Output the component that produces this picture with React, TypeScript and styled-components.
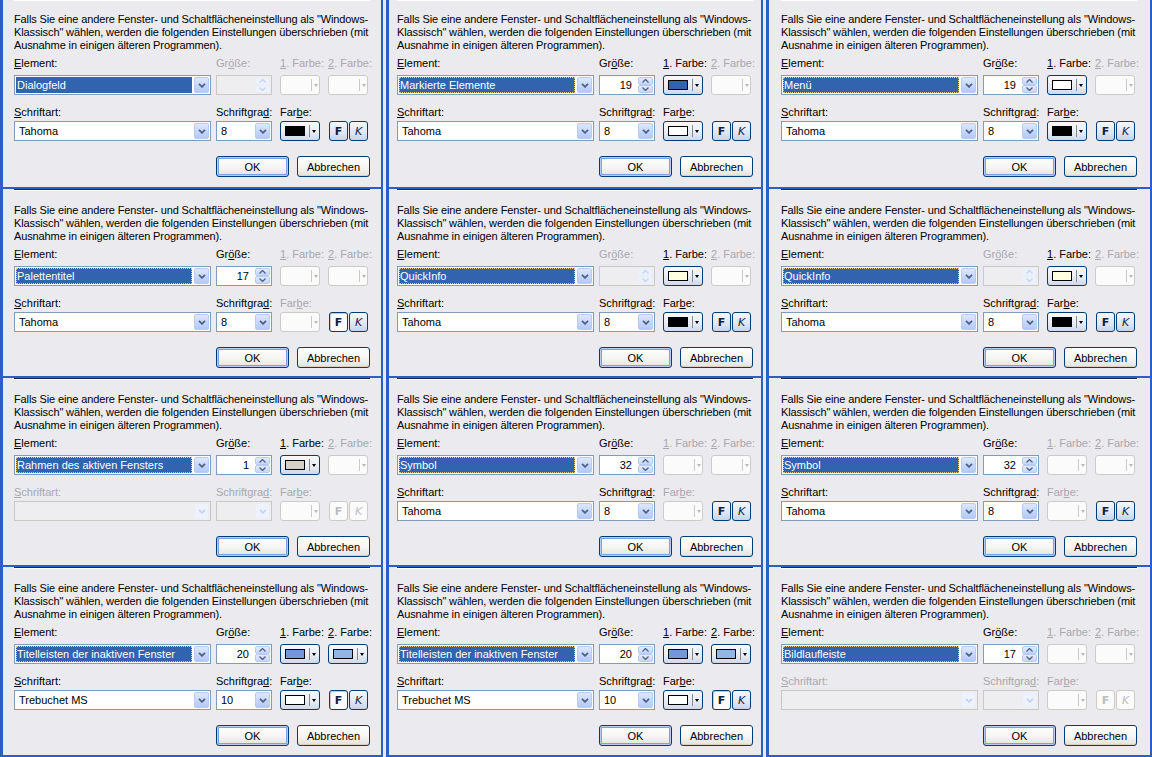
import React from "react";
import styled, { createGlobalStyle } from "styled-components";

const BG = "#ebeaee";
const FRAME = "#2d5ec6";
const GRAY = "#a9a8ad";
const NAVY = "#003c74";

const GlobalStyle = createGlobalStyle`
  html, body { margin: 0; padding: 0; background: ${BG}; }
  body {
    width: 1152px; height: 757px; overflow: hidden;
    font-family: "Liberation Sans", Arial, sans-serif;
    font-size: 11px;
  }
`;

const Grid = styled.div`
  display: grid;
  grid-template-columns: 383px 377px 386px;
  column-gap: 3px;
  grid-template-rows: 189px 189px 189px 190px;
  width: 1152px;
  height: 757px;
  background: ${BG};
`;

const Cell = styled.div<{ $pad: number }>`
  display: flex;
  flex-direction: column;
  box-sizing: border-box;
  border-left: 3px solid ${FRAME};
  border-right: 2px solid ${FRAME};
  border-bottom: 2px solid ${FRAME};
  padding-left: ${(p) => p.$pad}px;
  color: #000;
  overflow: hidden;
`;

const TopEdge = styled.div<{ $first?: boolean }>`
  width: 356px;
  height: ${(p) => (p.$first ? 1 : 2)}px;
  box-sizing: border-box;
  border-top: 1px solid ${(p) => (p.$first ? "#ffffff" : "#1e2850")};
  border-bottom: ${(p) => (p.$first ? "0" : "1px solid #ffffff")};
`;

const Intro = styled.p<{ $first?: boolean }>`
  margin: ${(p) => (p.$first ? 12 : 13)}px 0 0;
  line-height: 13px;
  letter-spacing: -0.12px;
  white-space: nowrap;
`;

const Row = styled.div<{ $mt: number; $h: number }>`
  display: grid;
  grid-template-columns: 202px 64px 48px 40px;
  margin-top: ${(p) => p.$mt}px;
  height: ${(p) => p.$h}px;
  align-items: center;
`;

const Label = styled.span<{ $disabled?: boolean }>`
  line-height: 13px;
  white-space: nowrap;
  color: ${(p) => (p.$disabled ? GRAY : "#000")};
  u { text-decoration: underline; text-underline-offset: 1px; }
`;

const Combo = styled.div<{ $w: number; $disabled?: boolean }>`
  width: ${(p) => p.$w}px;
  height: 20px;
  box-sizing: border-box;
  border: 1px solid ${(p) => (p.$disabled ? "#cbc8c0" : "#7f9db9")};
  background: ${(p) => (p.$disabled ? "#eeedf0" : "#ffffff")};
  padding: 1px;
  display: flex;
`;

const ComboText = styled.div<{ $selected?: boolean; $focus?: boolean }>`
  flex: 1;
  min-width: 0;
  display: flex;
  align-items: center;
  box-sizing: border-box;
  padding-left: ${(p) => (p.$selected ? 1 : 3)}px;
  white-space: nowrap;
  overflow: hidden;
  background: ${(p) => (p.$selected ? "#3163af" : "transparent")};
  color: ${(p) => (p.$selected ? "#ffffff" : "#000")};
  outline: ${(p) => (p.$focus ? "1px dotted #d9c97a" : "none")};
  outline-offset: -1px;
`;

const DropBtn = styled.div<{ $disabled?: boolean }>`
  width: 15px;
  margin-left: 2px;
  box-sizing: border-box;
  border: 1px solid ${(p) => (p.$disabled ? "#e8eefb" : "#b9cbf3")};
  border-radius: 2px;
  background: ${(p) =>
    p.$disabled ? "#edf2fd" : "linear-gradient(180deg, #dde8fd 0%, #c3d5fb 60%, #b4c9f5 100%)"};
  display: flex;
  align-items: center;
  justify-content: center;
`;

const Spin = styled.div<{ $disabled?: boolean }>`
  width: 56px;
  height: 20px;
  box-sizing: border-box;
  border: 1px solid ${(p) => (p.$disabled ? "#cbc8c0" : "#7f9db9")};
  background: ${(p) => (p.$disabled ? "#eeedf0" : "#ffffff")};
  padding: 1px;
  display: flex;
`;

const SpinValue = styled.div`
  flex: 1;
  text-align: right;
  padding-right: 6px;
  line-height: 16px;
`;

const SpinBtns = styled.div`
  width: 15px;
  display: flex;
  flex-direction: column;
`;

const SpinBtn = styled.div<{ $disabled?: boolean }>`
  flex: 1;
  box-sizing: border-box;
  border: 1px solid ${(p) => (p.$disabled ? "#e8eefb" : "#b9cbf3")};
  border-radius: 2px;
  background: ${(p) =>
    p.$disabled ? "#edf2fd" : "linear-gradient(180deg, #e3ecfd 0%, #c5d6fa 100%)"};
  display: flex;
  align-items: center;
  justify-content: center;
`;

const ColorBtn = styled.div<{ $disabled?: boolean }>`
  width: 40px;
  height: 20px;
  box-sizing: border-box;
  border: 1px solid ${(p) => (p.$disabled ? "#cdcbc4" : NAVY)};
  border-radius: 3px;
  background: ${(p) =>
    p.$disabled ? "#fbfbfb" : "linear-gradient(180deg, #f7f9fd 0%, #e6ebf5 60%, #cfd8ec 100%)"};
  display: flex;
  align-items: center;
  padding-left: 4px;
`;

const Swatch = styled.div<{ $c: string }>`
  width: 20px;
  height: 10px;
  box-sizing: border-box;
  border: 1px solid #000;
  background: ${(p) => p.$c};
`;

const Sep = styled.div<{ $disabled?: boolean }>`
  width: 1px;
  height: 12px;
  margin-left: ${(p) => (p.$disabled ? 26 : 4)}px;
  background: ${(p) => (p.$disabled ? "#c9c9c9" : "#8a8a8a")};
`;

const Tri = styled.div<{ $disabled?: boolean }>`
  margin-left: 2px;
  width: 0;
  height: 0;
  border-left: 2.5px solid transparent;
  border-right: 2.5px solid transparent;
  border-top: 3px solid ${(p) => (p.$disabled ? "#b8b8b8" : "#000")};
`;

const StyleBtns = styled.div`
  display: flex;
  gap: 1px;
  padding-left: 1px;
`;

const StyleBtn = styled.div<{ $state: "normal" | "pressed" | "disabled"; $italic?: boolean }>`
  width: 19px;
  height: 20px;
  box-sizing: border-box;
  border: 1px solid ${(p) => (p.$state === "disabled" ? "#cdcbc4" : NAVY)};
  border-radius: 3px;
  background: ${(p) =>
    p.$state === "disabled"
      ? "#fbfbfb"
      : p.$state === "pressed"
      ? "#fbfbfc"
      : "linear-gradient(180deg, #f4f7fc 0%, #dfe6f3 60%, #c8d3ea 100%)"};
  box-shadow: ${(p) => (p.$state === "pressed" ? "inset 1px 1px 0 #c7c7cc" : "none")};
  display: flex;
  align-items: center;
  justify-content: center;
  font-family: "DejaVu Sans", "Liberation Sans", sans-serif;
  font-size: 11px;
  font-weight: ${(p) => (p.$italic ? "normal" : "bold")};
  font-style: ${(p) => (p.$italic ? "italic" : "normal")};
  color: ${(p) => (p.$state === "disabled" ? "#bdbcc2" : "#10203f")};
`;

const Actions = styled.div`
  display: flex;
  gap: 8px;
  margin-top: 15px;
  margin-left: 202px;
`;

const PushBtn = styled.div<{ $default?: boolean }>`
  width: 73px;
  height: 21px;
  box-sizing: border-box;
  border: 1px solid ${NAVY};
  border-radius: 3px;
  background: linear-gradient(180deg, #ffffff 0%, #f5f5f2 55%, #e4e2da 100%);
  box-shadow: ${(p) =>
    p.$default
      ? "inset 0 0 0 1px #b7cdf6, inset 0 0 0 2px #7c9fe9"
      : "inset 0 -1px 0 #d6d2c6"};
  display: flex;
  align-items: center;
  justify-content: center;
  color: #000;
`;

const Chevron = ({ disabled }: { disabled?: boolean }) => (
  <svg width="8" height="5" viewBox="0 0 8 5">
    <path
      d="M1 0.8 L4 3.8 L7 0.8"
      fill="none"
      stroke={disabled ? "#c6d3ef" : "#4d6185"}
      strokeWidth="1.8"
    />
  </svg>
);

const SpinArrow = ({ up, disabled }: { up?: boolean; disabled?: boolean }) => (
  <svg width="7" height="4" viewBox="0 0 7 4">
    <path
      d={up ? "M0.5 3.5 L3.5 0.5 L6.5 3.5" : "M0.5 0.5 L3.5 3.5 L6.5 0.5"}
      fill="none"
      stroke={disabled ? "#c6d3ef" : "#4d6185"}
      strokeWidth="1.3"
    />
  </svg>
);

type BtnState = "normal" | "pressed" | "disabled";

interface PanelData {
  element: string;
  focus: boolean;
  size: string | null;
  color1: string | null;
  color2: string | null;
  font: string | null;
  fontSize: string | null;
  fontColor: string | null;
  bold: BtnState;
}

const ComboBox = ({
  w,
  text,
  selected,
  focus,
  disabled,
}: {
  w: number;
  text?: string;
  selected?: boolean;
  focus?: boolean;
  disabled?: boolean;
}) => (
  <Combo $w={w} $disabled={disabled}>
    <ComboText $selected={selected} $focus={focus}>
      {text}
    </ComboText>
    <DropBtn $disabled={disabled}>
      <Chevron disabled={disabled} />
    </DropBtn>
  </Combo>
);

const SpinBox = ({ value }: { value: string | null }) => (
  <Spin $disabled={value === null}>
    <SpinValue>{value}</SpinValue>
    <SpinBtns>
      <SpinBtn $disabled={value === null}>
        <SpinArrow up disabled={value === null} />
      </SpinBtn>
      <SpinBtn $disabled={value === null}>
        <SpinArrow disabled={value === null} />
      </SpinBtn>
    </SpinBtns>
  </Spin>
);

const ColorPicker = ({ color }: { color: string | null }) => (
  <ColorBtn $disabled={color === null}>
    {color !== null && <Swatch $c={color} />}
    <Sep $disabled={color === null} />
    <Tri $disabled={color === null} />
  </ColorBtn>
);

const Panel = ({ d, first, pad }: { d: PanelData; first?: boolean; pad: number }) => {
  const fontOff = d.font === null;
  return (
    <Cell $pad={pad}>
      <TopEdge $first={first} />
      <Intro $first={first}>
        Falls Sie eine andere Fenster- und Schaltflächeneinstellung als "Windows-
        <br />
        Klassisch" wählen, werden die folgenden Einstellungen überschrieben (mit
        <br />
        Ausnahme in einigen älteren Programmen).
      </Intro>
      <Row $mt={5} $h={13}>
        <Label>
          <u>E</u>lement:
        </Label>
        <Label $disabled={d.size === null}>
          Gr<u>ö</u>ße:
        </Label>
        <Label $disabled={d.color1 === null}>
          <u>1</u>. Farbe:
        </Label>
        <Label $disabled={d.color2 === null}>
          <u>2</u>. Farbe:
        </Label>
      </Row>
      <Row $mt={5} $h={20}>
        <ComboBox w={197} text={d.element} selected focus={d.focus} />
        <SpinBox value={d.size} />
        <ColorPicker color={d.color1} />
        <ColorPicker color={d.color2} />
      </Row>
      <Row $mt={11} $h={13}>
        <Label $disabled={fontOff}>
          <u>S</u>chriftart:
        </Label>
        <Label $disabled={fontOff}>
          Schriftgra<u>d</u>:
        </Label>
        <Label $disabled={d.fontColor === null}>
          Far<u>b</u>e:
        </Label>
        <span />
      </Row>
      <Row $mt={2} $h={20}>
        <ComboBox w={197} text={d.font ?? ""} disabled={fontOff} />
        <ComboBox w={56} text={d.fontSize ?? ""} disabled={fontOff} />
        <ColorPicker color={d.fontColor} />
        <StyleBtns>
          <StyleBtn $state={d.bold}>F</StyleBtn>
          <StyleBtn $state={fontOff ? "disabled" : "normal"} $italic>
            K
          </StyleBtn>
        </StyleBtns>
      </Row>
      <Actions>
        <PushBtn $default>OK</PushBtn>
        <PushBtn>Abbrechen</PushBtn>
      </Actions>
    </Cell>
  );
};

const quick: PanelData = {
  element: "QuickInfo",
  focus: true,
  size: null,
  color1: "#ffffe1",
  color2: null,
  font: "Tahoma",
  fontSize: "8",
  fontColor: "#000000",
  bold: "normal",
};

const symbol: PanelData = {
  element: "Symbol",
  focus: true,
  size: "32",
  color1: null,
  color2: null,
  font: "Tahoma",
  fontSize: "8",
  fontColor: null,
  bold: "normal",
};

const inactive: PanelData = {
  element: "Titelleisten der inaktiven Fenster",
  focus: true,
  size: "20",
  color1: "#7099d8",
  color2: "#8db6e9",
  font: "Trebuchet MS",
  fontSize: "10",
  fontColor: "#ffffff",
  bold: "pressed",
};

const panels: PanelData[] = [
  {
    element: "Dialogfeld",
    focus: false,
    size: null,
    color1: null,
    color2: null,
    font: "Tahoma",
    fontSize: "8",
    fontColor: "#000000",
    bold: "normal",
  },
  {
    element: "Markierte Elemente",
    focus: true,
    size: "19",
    color1: "#3163af",
    color2: null,
    font: "Tahoma",
    fontSize: "8",
    fontColor: "#ffffff",
    bold: "normal",
  },
  {
    element: "Menü",
    focus: true,
    size: "19",
    color1: "#ffffff",
    color2: null,
    font: "Tahoma",
    fontSize: "8",
    fontColor: "#000000",
    bold: "normal",
  },
  {
    element: "Palettentitel",
    focus: true,
    size: "17",
    color1: null,
    color2: null,
    font: "Tahoma",
    fontSize: "8",
    fontColor: null,
    bold: "pressed",
  },
  quick,
  quick,
  {
    element: "Rahmen des aktiven Fensters",
    focus: true,
    size: "1",
    color1: "#d4d0c8",
    color2: null,
    font: null,
    fontSize: null,
    fontColor: null,
    bold: "disabled",
  },
  symbol,
  symbol,
  inactive,
  inactive,
  {
    element: "Bildlaufleiste",
    focus: true,
    size: "17",
    color1: null,
    color2: null,
    font: null,
    fontSize: null,
    fontColor: null,
    bold: "disabled",
  },
];

const colPad = [11, 8, 12];

export default function App() {
  return (
    <>
      <GlobalStyle />
      <Grid>
        {panels.map((d, i) => (
          <Panel key={i} d={d} first={i < 3} pad={colPad[i % 3]} />
        ))}
      </Grid>
    </>
  );
}
